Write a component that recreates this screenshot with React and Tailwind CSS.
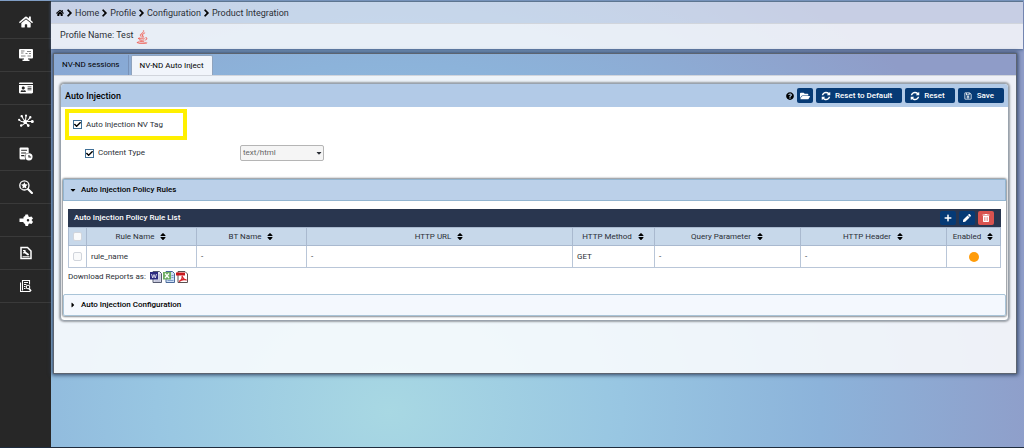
import { useState } from 'react';
import {
    FaHome,
    FaChevronRight,
    FaIdCard,
    FaJava,
    FaQuestionCircle,
    FaFolderOpen,
    FaRegSave,
    FaPlus,
    FaPen,
    FaTrashAlt,
    FaSort,
    FaCaretDown,
    FaCaretRight,
    FaCheck,
} from 'react-icons/fa';

const MonitorIcon = () => (
    <svg viewBox="0 0 28 24" className="h-3 w-3.5" fill="currentColor">
        <path d="M2 0h24a2 2 0 0 1 2 2v15a2 2 0 0 1-2 2h-8v2h3v3H7v-3h3v-2H2a2 2 0 0 1-2-2V2a2 2 0 0 1 2-2z" />
        <path d="M4 4h7M4 8h5M4 14h9M16 5h8M13 9h4M20 9h4M17 14h7" stroke="#777" strokeWidth="1.800" />
    </svg>
);

const NetworkIcon = () => (
    <svg viewBox="0 0 28 24" className="h-3.5 w-4" stroke="currentColor" fill="currentColor" strokeWidth="1.800">
        <path d="M7 4l2 4 4 5M14 3l-1 10M21 6l-3 4-5 3M2 10l4 3 7 1M6 20l4-2 3-4M13 14l5 6M13 13h12" fill="none" />
        <circle cx="12.500" cy="13.500" r="2.500" />
        <circle cx="6.500" cy="3.500" r="1.200" />
        <circle cx="14" cy="2.500" r="1" />
        <circle cx="21.500" cy="5.500" r="1.200" />
        <circle cx="2" cy="10" r="1" />
        <circle cx="5.500" cy="20" r="1.200" />
        <circle cx="18" cy="20" r="1.500" />
        <circle cx="25" cy="13" r="1.800" />
    </svg>
);

const ReportClockIcon = () => (
    <svg viewBox="0 0 26 26" className="h-3.5 w-3.5" fill="currentColor">
        <path fillRule="evenodd" d="M3 1h13a2 2 0 0 1 2 2v8a7.500 7.500 0 0 0-6 12H3a2 2 0 0 1-2-2V3a2 2 0 0 1 2-2zm1 4v2h11V5H4zm0 5v2h9v-2H4zm0 5v2h6v-2H4z" />
        <path fillRule="evenodd" d="M18.500 11.500a6.700 6.700 0 1 1 0 13.400a6.700 6.700 0 0 1 0-13.400zm-1 3.500v4.500h5v-2h-3V15h-2z" />
    </svg>
);

const SearchStarIcon = () => (
    <svg viewBox="0 0 26 26" className="h-3.5 w-3.5" fill="currentColor">
        <circle cx="10" cy="10" r="8.500" fill="none" stroke="currentColor" strokeWidth="2.500" />
        <path d="M17 17l7 7" stroke="currentColor" strokeWidth="4" strokeLinecap="round" />
        <path d="M10 4l2 4 4 .5-3 3 .8 4.300L10 14l-3.800 1.800.8-4.300-3-3L8 8z" />
    </svg>
);

const GearPuzzleIcon = () => (
    <svg viewBox="0 0 28 26" className="h-3.5 w-3.5" fill="currentColor">
        <path fillRule="evenodd" d="M13 2h5l1 4 2 1 4-1 3 4-3 3 3 4-3 4-4-1-2 1-1 4h-5l-1-4-3-2v-2H1v-7h8V7l3-2zm5 9a2.500 2.500 0 1 0 0 5a2.500 2.500 0 0 0 0-5z" />
    </svg>
);

const FileWrenchIcon = () => (
    <svg viewBox="0 0 24 26" className="h-3.5 w-3" fill="none" stroke="currentColor">
        <path d="M2 2h13l7 7v15H2z" strokeWidth="3" />
        <path d="M9 11l7 5" strokeWidth="4" strokeLinecap="round" />
        <path d="M6 8l4 0v4l-4 1M5 20.500h14" strokeWidth="2.200" />
    </svg>
);

const FileSearchIcon = () => (
    <svg viewBox="0 0 24 26" className="h-3.5 w-3" fill="none" stroke="currentColor" strokeWidth="2.200">
        <path d="M5 22V2h14v8M1 6v18h20M8 6h8M8 10h5M8 14h3M8 18h3" />
        <circle cx="16" cy="15" r="3.500" />
        <path d="M18 18l4 5" strokeWidth="3.500" />
    </svg>
);

const RefreshIcon = () => (
    <svg viewBox="0 0 1792 1792" className="h-2.5 w-2.5" fill="currentColor">
        <path d="M1639 1056q0 5-1 7-64 268-268 434.500t-478 166.500q-146 0-282.500-55t-243.500-157l-129 129q-19 19-45 19t-45-19-19-45v-448q0-26 19-45t45-19h448q26 0 45 19t19 45-19 45l-137 137q71 66 161 102t187 36q134 0 250-65t186-179q11-17 53-117 8-23 30-23h192q13 0 22.500 9.500t9.500 22.500zm25-800v448q0 26-19 45t-45 19h-448q-26 0-45-19t-19-45 19-45l138-138q-148-137-349-137-134 0-250 65t-186 179q-11 17-53 117-8 23-30 23h-199q-13 0-22.500-9.500t-9.500-22.500v-7q65-268 270-434.500t480-166.500q146 0 284 55.500t245 156.500l130-129q19-19 45-19t45 19 19 45z" />
    </svg>
);

const WordIcon = () => (
    <svg viewBox="0 0 24 24" className="h-3 w-3">
        <path d="M6 1h13l4 4v18H6z" fill="#e4e6f2" stroke="#555a70" strokeWidth="2" />
        <path d="M17 8h4M17 12h4M17 16h4M9 20h12" stroke="#8b8fb0" strokeWidth="1.500" />
        <path d="M0 2h16v15H0z" fill="#2c2a80" />
        <path d="M3 6l2.500 8L8 7l2.500 7L13 6" fill="none" stroke="#fff" strokeWidth="1.500" />
    </svg>
);

const ExcelIcon = () => (
    <svg viewBox="0 0 24 24" className="h-3 w-3">
        <path d="M6 1h13l4 4v18H6z" fill="#cfdff5" stroke="#4a6a9a" strokeWidth="2" />
        <path d="M17 9h4M17 13h4M9 19h12" stroke="#7d9cc8" strokeWidth="2" />
        <path d="M0 2h16v15H0z" fill="#6fae62" />
        <path d="M4 5l8 9M12 5l-8 9" stroke="#fff" strokeWidth="2.500" />
    </svg>
);

const PdfIcon = () => (
    <svg viewBox="0 0 24 24" className="h-3 w-3">
        <path d="M4 1h14l5 5v17H4z" fill="#fff" stroke="#5c5050" strokeWidth="2" />
        <path d="M0 3h18v6H0z" fill="#c8161c" />
        <path d="M6 21c5-3 7-8 6-11c3 7 5 8 9 8c-5-2-10-1-15 3z" fill="none" stroke="#d8232a" strokeWidth="2.500" />
    </svg>
);

const menu = [
    { label: 'Home', icon: <FaHome className="h-3.5 w-3.5" /> },
    { label: 'Dashboard', icon: <MonitorIcon /> },
    { label: 'Profiles', icon: <FaIdCard className="h-3.5 w-3.5" /> },
    { label: 'Topology', icon: <NetworkIcon /> },
    { label: 'Scheduled reports', icon: <ReportClockIcon /> },
    { label: 'Discovery', icon: <SearchStarIcon /> },
    { label: 'Instrumentation', icon: <GearPuzzleIcon /> },
    { label: 'File settings', icon: <FileWrenchIcon /> },
    { label: 'Audit log', icon: <FileSearchIcon /> },
];

const columns = [
    { name: 'Rule Name', width: 'w-[110px]' },
    { name: 'BT Name', width: 'w-[110px]' },
    { name: 'HTTP URL', width: '' },
    { name: 'HTTP Method', width: 'w-[82px]' },
    { name: 'Query Parameter', width: 'w-[146px]' },
    { name: 'HTTP Header', width: 'w-[146px]' },
    { name: 'Enabled', width: 'w-[54px]' },
];

const rules = [{ name: 'rule_name', bt: '-', url: '-', method: 'GET', query: '-', header: '-' }];

const Checkbox = ({ id, label, ...props }) => (
    <span className="relative inline-flex h-[9px] w-[9px] shrink-0">
        <input
            type="checkbox"
            id={id}
            aria-label={label}
            className="peer h-full w-full appearance-none rounded-xs border border-gray-300 bg-gray-50 checked:rounded-none checked:border-[#3f6f96] checked:bg-white"
            {...props}
        />
        <FaCheck className="pointer-events-none absolute inset-px hidden h-[7px] w-[7px] text-black peer-checked:block" />
    </span>
);

const ActionButton = ({ icon, children }) => (
    <button className="flex h-[15px] items-center gap-1 rounded-xs bg-[#063a75] pr-2.5 pl-[5px] font-medium text-white hover:bg-[#0a4a92]">
        <span className="flex w-2.5 justify-center">{icon}</span>
        {children}
    </button>
);

const Sidebar = () => (
    <nav className="w-[51px] shrink-0 bg-[#272727] pt-[5px] text-white">
        {menu.map((item) => (
            <a
                key={item.label}
                href="#"
                aria-label={item.label}
                className="flex h-[33px] items-center justify-center border-b border-[#3a3a3a] hover:bg-[#333]"
            >
                {item.icon}
            </a>
        ))}
    </nav>
);

const Breadcrumb = () => (
    <header className="mr-px border-t border-[#5d7590] shadow-[0_1px_3px_#47618a]">
        <div className="flex h-[22px] items-center gap-[3px] border-b border-gray-300 bg-white/50 px-[5px] text-[9px]">
            <FaHome className="h-2 w-2 text-black" />
            {['Home', 'Profile', 'Configuration', 'Product Integration'].map((crumb) => (
                <span key={crumb} className="flex items-center gap-[3px]">
                    <FaChevronRight className="h-2 w-[5px] stroke-black stroke-[40px] text-black" />
                    <a href="#">{crumb}</a>
                </span>
            ))}
        </div>
        <div className="flex h-[25px] items-center gap-0.5 bg-white/80 px-[9px] text-[9px]">
            <span className="pb-1">Profile Name: Test</span>
            <FaJava className="h-3.5 w-3.5 stroke-[#f0665c] stroke-[12px] text-[#f0665c]" />
        </div>
    </header>
);

const RuleTable = () => (
    <div className="px-[5px] pt-2">
        <div className="flex h-[18px] items-center justify-between bg-[#29364f] pr-[7px] pl-1.5 font-medium text-white">
            <span>Auto Injection Policy Rule List</span>
            <div className="flex gap-[3px]">
                <button aria-label="Add rule" className="flex h-3.5 w-4 items-center justify-center rounded-xs bg-[#063a75]">
                    <FaPlus className="h-2 w-2" />
                </button>
                <button aria-label="Edit rule" className="flex h-3.5 w-4 items-center justify-center rounded-xs bg-[#063a75]">
                    <FaPen className="h-2 w-2" />
                </button>
                <button aria-label="Delete rule" className="flex h-3.5 w-4 items-center justify-center rounded-xs bg-[#d9534f]">
                    <FaTrashAlt className="h-2 w-2" />
                </button>
            </div>
        </div>
        <table className="w-full table-fixed border-collapse">
            <thead>
                <tr className="h-[18px] bg-[#c7d8ea]">
                    <th className="w-[18px] border border-[#a9b9cf] p-0">
                        <span className="flex justify-center">
                            <Checkbox label="Select all rules" />
                        </span>
                    </th>
                    {columns.map((col) => (
                        <th key={col.name} className={`border border-[#a9b9cf] p-0 font-normal ${col.width}`}>
                            <span className="flex items-center justify-center gap-[5px] whitespace-nowrap">
                                {col.name}
                                <FaSort className="h-[9px] w-2 text-black" />
                            </span>
                        </th>
                    ))}
                </tr>
            </thead>
            <tbody>
                {rules.map((rule) => (
                    <tr key={rule.name} className="h-[22px] bg-white">
                        <td className="border border-[#b9c6d8] p-0">
                            <span className="flex justify-center">
                                <Checkbox label={`Select ${rule.name}`} />
                            </span>
                        </td>
                        <td className="border border-[#b9c6d8] px-1">{rule.name}</td>
                        <td className="border border-[#b9c6d8] px-1">{rule.bt}</td>
                        <td className="border border-[#b9c6d8] px-1">{rule.url}</td>
                        <td className="border border-[#b9c6d8] px-1">{rule.method}</td>
                        <td className="border border-[#b9c6d8] px-1">{rule.query}</td>
                        <td className="border border-[#b9c6d8] px-1">{rule.header}</td>
                        <td className="border border-[#b9c6d8] px-1">
                            <span className="mx-auto block h-2.5 w-2.5 rounded-full bg-[#ff9c0a]"></span>
                        </td>
                    </tr>
                ))}
            </tbody>
        </table>
        <div className="flex h-[22px] items-center gap-px pb-1">
            <span className="pr-[3px]">Download Reports as:</span>
            <a href="#" aria-label="Word"><WordIcon /></a>
            <a href="#" aria-label="Excel"><ExcelIcon /></a>
            <a href="#" aria-label="PDF"><PdfIcon /></a>
        </div>
    </div>
);

const App = () => {
    const [rulesOpen, setRulesOpen] = useState(true);

    return (
        <div className="flex min-h-screen border-t border-b border-t-[#7f9dc4] border-b-[#1f2c3d] bg-[radial-gradient(ellipse_65%_120%_at_38%_92%,#a8d8e3_0%,#98c6e2_35%,#8cb3da_65%,#8f9cc8_100%)] font-[Roboto,sans-serif] text-[8px] leading-3 text-[#2b2f36]">
            <Sidebar />
            <div className="flex min-w-0 flex-1 flex-col">
                <Breadcrumb />

                <main className="mt-1 mr-[7px] mb-[73px] ml-0.5 flex flex-1 flex-col border border-[#5c6470] shadow-[0_0_4px_1px_#2f4463]">
                    {/* Tabs */}
                    <div className="flex h-[21px] items-end gap-0.5 text-black" role="tablist">
                        <button role="tab" aria-selected="false" className="h-5 border-r border-[#7892b8] bg-[#86a9d6]/60 px-2">
                            NV-ND sessions
                        </button>
                        <button role="tab" aria-selected="true" className="h-5 rounded-t-xs border border-b-0 border-[#8fa3bd] bg-[#f1f5fb] px-2">
                            NV-ND Auto Inject
                        </button>
                    </div>

                    <div className="flex-1 border-t border-gray-300 bg-white/85 pt-[7px] pr-[7px] pl-1.5">
                        <section className="rounded-sm border border-[#9aa3ad] bg-white shadow-[0_0_2px_1px_#9a9fa5]">
                            <div className="flex h-[23px] items-center justify-between rounded-t-sm bg-[#b2cae7] pr-1 pl-1">
                                <h2 className="text-[9px] font-medium text-black">Auto Injection</h2>
                                <div className="flex items-center gap-[3px]">
                                    <FaQuestionCircle className="h-2 w-2 text-black" />
                                    <button aria-label="Open" className="flex h-[15px] w-4 items-center justify-center rounded-xs bg-[#063a75] text-white">
                                        <FaFolderOpen className="h-2.5 w-2.5" />
                                    </button>
                                    <ActionButton icon={<RefreshIcon />}>Reset to Default</ActionButton>
                                    <ActionButton icon={<RefreshIcon />}>Reset</ActionButton>
                                    <ActionButton icon={<FaRegSave className="h-2 w-2" />}>Save</ActionButton>
                                </div>
                            </div>

                            <div className="px-1 pt-0.5">
                                <div className="flex h-[31px] w-[122px] items-center gap-1 border-4 border-[#fff000] px-1">
                                    <Checkbox id="nvTag" defaultChecked />
                                    <label htmlFor="nvTag">Auto Injection NV Tag</label>
                                </div>
                                <div className="mt-[5px] flex h-4 items-center pl-5">
                                    <div className="flex w-[155px] items-center gap-1">
                                        <Checkbox id="contentType" defaultChecked />
                                        <label htmlFor="contentType">Content Type</label>
                                    </div>
                                    <div className="relative">
                                        <select
                                            aria-label="Content type value"
                                            className="h-4 w-[84px] appearance-none rounded-xs border border-[#b5b5b5] bg-[#f5f5f5] px-0.5 text-[#666]"
                                        >
                                            <option>text/html</option>
                                        </select>
                                        <FaCaretDown className="pointer-events-none absolute top-1 right-px h-2 w-2" />
                                    </div>
                                </div>
                            </div>

                            <div className="mx-0.5 mt-[18px] mb-1 rounded-xs bg-white shadow-[0_0_2px_1px_#858b92]">
                                <button
                                    aria-expanded={rulesOpen}
                                    onClick={() => setRulesOpen(!rulesOpen)}
                                    className="flex h-[22px] w-full items-center gap-1 border border-[#93b5d0] bg-[#bbd0e9] px-[5px] font-medium text-black"
                                >
                                    {rulesOpen ? <FaCaretDown className="h-2 w-2" /> : <FaCaretRight className="h-2 w-2" />}
                                    Auto Injection Policy Rules
                                </button>
                                {rulesOpen && <RuleTable />}
                                <button
                                    aria-expanded="false"
                                    className="mt-1 flex h-[22px] w-full items-center gap-1 rounded-xs border border-[#a9c4d8] bg-[#f4f8fe] px-[5px] font-medium text-black"
                                >
                                    <FaCaretRight className="h-2 w-2" />
                                    Auto Injection Configuration
                                </button>
                            </div>
                        </section>
                    </div>
                </main>
            </div>
        </div>
    );
};

export default App;
